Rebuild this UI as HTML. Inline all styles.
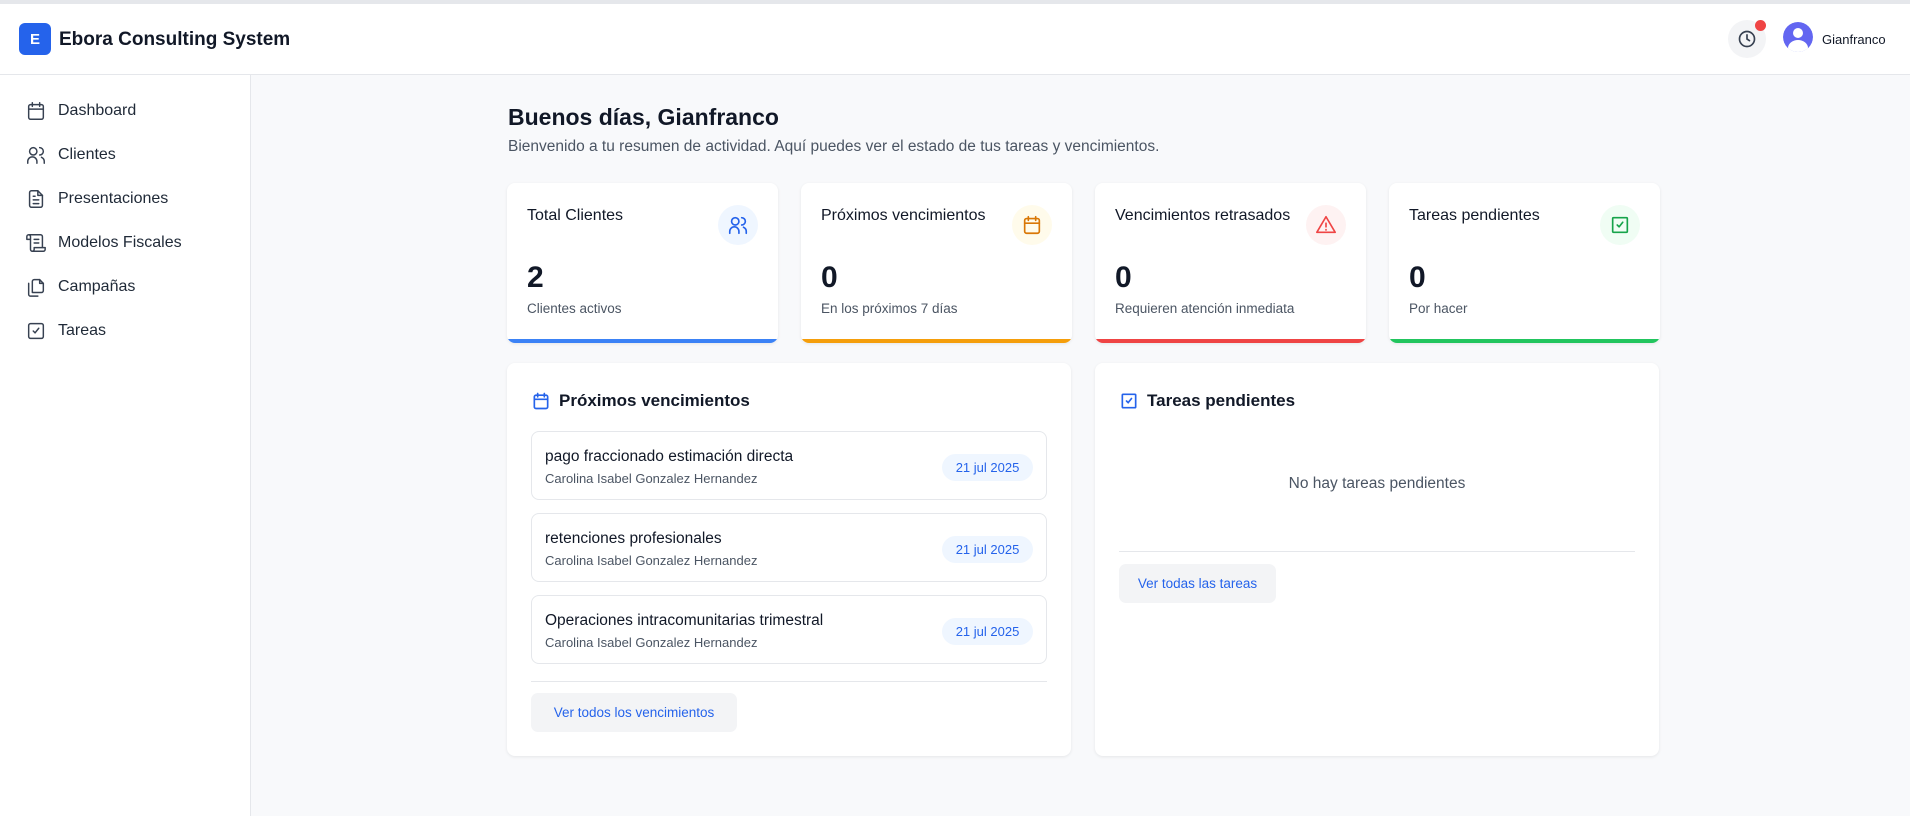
<!DOCTYPE html>
<html><head><meta charset="utf-8"><style>
*{box-sizing:border-box;margin:0;padding:0}
body{width:1910px;height:816px;overflow:hidden;background:#f8f9fb;font-family:"Liberation Sans",sans-serif;color:#111827;position:relative}
.a{position:absolute}
.hdr{left:0;top:0;width:1910px;height:75px;background:#fff;border-top:4px solid #e5e7eb;border-bottom:1px solid #e5e7eb}
.side{left:0;top:75px;width:251px;height:741px;background:#fff;border-right:1px solid #e5e7eb}
.nav{left:25px;font-size:16px;color:#1f2937;display:flex;align-items:center}
.nav svg{width:22px;height:22px;margin-right:11px;stroke:#374151;fill:none;stroke-width:1.6;stroke-linecap:round;stroke-linejoin:round}
.card{background:#fff;border-radius:8px;box-shadow:0 1px 3px rgba(0,0,0,.08)}
.st{height:160px;width:271px;top:183px;overflow:hidden}
.st .t{position:absolute;left:20px;top:24px;font-size:16px;color:#111827}
.st .ic{position:absolute;right:20px;top:22px;width:40px;height:40px;border-radius:50%;display:flex;align-items:center;justify-content:center}
.st .ic svg{width:22px;height:22px;fill:none;stroke-width:1.8;stroke-linecap:round;stroke-linejoin:round}
.st .n{position:absolute;left:20px;top:78px;font-size:30px;font-weight:bold}
.st .s{position:absolute;left:20px;top:118px;font-size:13.5px;color:#4b5563}
.st .bar{position:absolute;left:0;bottom:0;width:100%;height:4px}
.it{left:24px;width:516px;height:69px;border:1px solid #e5e7eb;border-radius:8px}
.it .a1{position:absolute;left:13px;top:16px;font-size:15.5px;color:#111827}
.it .a2{position:absolute;left:13px;top:39px;font-size:13px;color:#4b5563}
.it .b{position:absolute;right:13px;top:22px;width:91px;height:27px;border-radius:14px;background:#eff6ff;color:#2563eb;font-size:13px;display:flex;align-items:center;justify-content:center}
.btn{background:#f3f4f6;border-radius:7px;color:#2563eb;font-size:13.5px;display:flex;align-items:center;justify-content:center}
</style></head><body>
<div class="a hdr">
 <div class="a" style="left:19px;top:19px;width:32px;height:32px;background:#2563eb;border-radius:6px;color:#fff;font-weight:bold;font-size:15px;display:flex;align-items:center;justify-content:center">E</div>
 <div class="a" style="left:59px;top:25px;font-size:19px;font-weight:bold;color:#111827">Ebora Consulting System</div>
 <div class="a" style="left:1728px;top:16px;width:38px;height:38px;border-radius:50%;background:#f3f4f6;display:flex;align-items:center;justify-content:center"><svg width="20" height="20" viewBox="0 0 24 24" fill="none" stroke="#374151" stroke-width="2" stroke-linecap="round"><circle cx="12" cy="12" r="9"/><path d="M12 7v5l3 2"/></svg></div>
 <div class="a" style="left:1755px;top:16px;width:11px;height:11px;border-radius:50%;background:#ef4444"></div>
 <div class="a" style="left:1783px;top:18px;width:30px;height:30px;border-radius:50%;background:#dbeafe;overflow:hidden"><div class="a" style="left:0;top:0;width:30px;height:30px;border-radius:50%;background:#6366f1"></div><div class="a" style="left:10px;top:6px;width:10px;height:10px;border-radius:50%;background:#fff"></div><div class="a" style="left:5px;top:18px;width:20px;height:16px;border-radius:50%;background:#fff"></div></div>
 <div class="a" style="left:1822px;top:28px;font-size:13px;color:#111827">Gianfranco</div>
</div>
<div class="a side"></div>
<div class="a nav" style="top:100px"><svg viewBox="0 0 24 24"><rect x="4" y="5" width="16" height="16" rx="2"/><path d="M8 3v4M16 3v4M4 10h16"/></svg>Dashboard</div>
<div class="a nav" style="top:144px"><svg viewBox="0 0 24 24"><circle cx="9" cy="8" r="4"/><path d="M3 21v-2a5 5 0 0 1 10 0v2M16 4a4 4 0 0 1 0 8M21 21v-2a5 5 0 0 0-3-4.5"/></svg>Clientes</div>
<div class="a nav" style="top:188px"><svg viewBox="0 0 24 24"><path d="M14 3H7a2 2 0 0 0-2 2v14a2 2 0 0 0 2 2h10a2 2 0 0 0 2-2V8z"/><path d="M14 3v5h5M9 13h6M9 17h6M9 9h2"/></svg>Presentaciones</div>
<div class="a nav" style="top:232px"><svg viewBox="0 0 24 24"><path d="M8 21h12a2 2 0 0 0 2-2v-2H10v2a2 2 0 1 1-4 0V5a2 2 0 1 0-4 0v3h4M19 17V5a2 2 0 0 0-2-2H4M15 8h-5M15 12h-5"/></svg>Modelos Fiscales</div>
<div class="a nav" style="top:276px"><svg viewBox="0 0 24 24"><path d="M8 18V6a2 2 0 0 1 2-2h6l4 4v8a2 2 0 0 1-2 2z"/><path d="M16 4v4h4M4 8v12a2 2 0 0 0 2 2h8"/></svg>Campañas</div>
<div class="a nav" style="top:320px"><svg viewBox="0 0 24 24"><rect x="4" y="4" width="16" height="16" rx="2"/><path d="M9 12l2 2 4-5"/></svg>Tareas</div>

<div class="a" style="left:508px;top:104px;font-size:23px;font-weight:bold">Buenos días, Gianfranco</div>
<div class="a" style="left:508px;top:138px;font-size:15.5px;color:#4b5563">Bienvenido a tu resumen de actividad. Aquí puedes ver el estado de tus tareas y vencimientos.</div>

<div class="a card st" style="left:507px"><div class="t">Total Clientes</div><div class="ic" style="background:#eff6ff"><svg viewBox="0 0 24 24" stroke="#2563eb"><circle cx="9" cy="8" r="4"/><path d="M3 21v-2a5 5 0 0 1 10 0v2M16 4a4 4 0 0 1 0 8M21 21v-2a5 5 0 0 0-3-4.5"/></svg></div><div class="n">2</div><div class="s">Clientes activos</div><div class="bar" style="background:#3b82f6"></div></div>
<div class="a card st" style="left:801px"><div class="t">Próximos vencimientos</div><div class="ic" style="background:#fffbeb"><svg viewBox="0 0 24 24" stroke="#d97706"><rect x="4" y="5" width="16" height="16" rx="2"/><path d="M8 3v4M16 3v4M4 10h16"/></svg></div><div class="n">0</div><div class="s">En los próximos 7 días</div><div class="bar" style="background:#f59e0b"></div></div>
<div class="a card st" style="left:1095px"><div class="t">Vencimientos retrasados</div><div class="ic" style="background:#fef2f2"><svg viewBox="0 0 24 24" stroke="#ef4444"><path d="M12 3L2 20h20z"/><path d="M12 10v4M12 17v.5"/></svg></div><div class="n">0</div><div class="s">Requieren atención inmediata</div><div class="bar" style="background:#ef4444"></div></div>
<div class="a card st" style="left:1389px"><div class="t">Tareas pendientes</div><div class="ic" style="background:#f0fdf4"><svg viewBox="0 0 24 24" stroke="#16a34a"><rect x="4" y="4" width="16" height="16" rx="1"/><path d="M9 12l2 2 4-5"/></svg></div><div class="n">0</div><div class="s">Por hacer</div><div class="bar" style="background:#22c55e"></div></div>

<div class="a card" style="left:507px;top:363px;width:564px;height:393px">
 <svg class="a" style="left:24px;top:28px" width="20" height="20" viewBox="0 0 24 24" fill="none" stroke="#2563eb" stroke-width="2" stroke-linecap="round"><rect x="4" y="5" width="16" height="16" rx="2"/><path d="M8 3v4M16 3v4M4 10h16"/></svg>
 <div class="a" style="left:52px;top:28px;font-size:17px;font-weight:bold;color:#111827">Próximos vencimientos</div>
 <div class="a it" style="top:68px"><div class="a1">pago fraccionado estimación directa</div><div class="a2">Carolina Isabel Gonzalez Hernandez</div><div class="b">21 jul 2025</div></div>
 <div class="a it" style="top:150px"><div class="a1">retenciones profesionales</div><div class="a2">Carolina Isabel Gonzalez Hernandez</div><div class="b">21 jul 2025</div></div>
 <div class="a it" style="top:232px"><div class="a1">Operaciones intracomunitarias trimestral</div><div class="a2">Carolina Isabel Gonzalez Hernandez</div><div class="b">21 jul 2025</div></div>
 <div class="a" style="left:24px;top:318px;width:516px;height:1px;background:#e5e7eb"></div>
 <div class="a btn" style="left:24px;top:330px;width:206px;height:39px">Ver todos los vencimientos</div>
</div>
<div class="a card" style="left:1095px;top:363px;width:564px;height:393px">
 <svg class="a" style="left:24px;top:28px" width="20" height="20" viewBox="0 0 24 24" fill="none" stroke="#2563eb" stroke-width="2" stroke-linecap="round"><rect x="4" y="4" width="16" height="16" rx="1"/><path d="M9 12l2 2 4-5"/></svg>
 <div class="a" style="left:52px;top:28px;font-size:17px;font-weight:bold;color:#111827">Tareas pendientes</div>
 <div class="a" style="left:0;width:564px;top:112px;text-align:center;font-size:15.5px;color:#4b5563">No hay tareas pendientes</div>
 <div class="a" style="left:24px;top:188px;width:516px;height:1px;background:#e5e7eb"></div>
 <div class="a btn" style="left:24px;top:201px;width:157px;height:39px">Ver todas las tareas</div>
</div>
</body></html>
